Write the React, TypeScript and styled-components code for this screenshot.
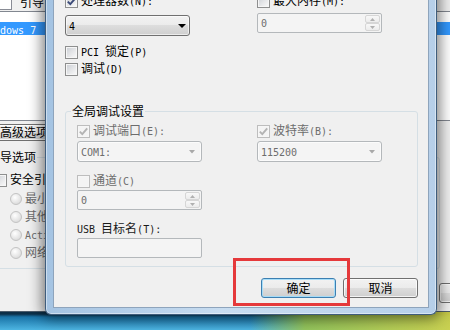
import React from "react";
import styled, { createGlobalStyle } from "styled-components";

const GlobalStyle = createGlobalStyle`
  html, body {
    margin: 0;
    padding: 0;
    overflow: hidden;
  }
`;

/* ---------- text helpers ---------- */

const Half = styled.span`
  font-family: "DejaVu Sans Mono", "Liberation Mono", monospace;
  font-size: 10px;
`;

/**
 * Draws ASCII runs half-width next to the CJK glyphs, the way SimSun does
 *
 * @param props - The text to draw
 */
const Txt = ({ children }: { children: string }) => (
  <>
    {children
      .split(/([\x20-\x7e]+)/)
      .filter(Boolean)
      .map((part, i) =>
        /^[\x20-\x7e]+$/.test(part) ? <Half key={i}>{part}</Half> : <React.Fragment key={i}>{part}</React.Fragment>
      )}
  </>
);

/* ---------- desktop ---------- */

const Desktop = styled.div`
  position: relative;
  width: 450px;
  height: 330px;
  overflow: hidden;
  font-family: "Noto Sans CJK SC", "Noto Sans CJK JP", sans-serif;
  font-size: 12px;
  line-height: 14px;
  color: #000;
  background:
    linear-gradient(90deg, rgba(150, 196, 64, 0) 250px, rgba(165, 200, 60, 0.8) 305px, rgba(212, 212, 70, 0.92) 450px),
    linear-gradient(180deg, #0c2f48 0, #0c2f48 314px, #1a74a8 317px, #4db5e2 330px);
`;

const Highlight = styled.div`
  position: absolute;
  left: 233px;
  top: 258px;
  width: 117px;
  height: 48px;
  box-sizing: border-box;
  border: 3px solid #e5393b;
  pointer-events: none;
`;

/* ---------- common controls ---------- */

const CheckRow = styled.label<{ $disabled?: boolean; $mt?: number }>`
  display: flex;
  align-items: center;
  gap: 3px;
  height: 14px;
  margin-top: ${(p) => p.$mt ?? 0}px;
  white-space: nowrap;
  color: ${(p) => (p.$disabled ? "#6d6d6d" : "#000")};
`;

const CheckBox = styled.span<{ $disabled?: boolean }>`
  flex: none;
  width: 13px;
  height: 13px;
  box-sizing: border-box;
  display: flex;
  align-items: center;
  justify-content: center;
  border: 1px solid ${(p) => (p.$disabled ? "#bdbdbd" : "#8e8f8f")};
  background: ${(p) =>
    p.$disabled ? "#f4f4f4" : "linear-gradient(135deg, #c9cdd3 0%, #e6e7e9 55%, #fbfbfb 100%)"};
  box-shadow: inset 0 0 0 1px #f6f6f6;
`;

const RadioDot = styled.span`
  flex: none;
  width: 12px;
  height: 12px;
  box-sizing: border-box;
  border-radius: 50%;
  border: 1px solid #c3c3c3;
  background: radial-gradient(circle at 40% 35%, #ffffff 0%, #e6e6e6 55%, #d0d0d0 100%);
`;

interface OptionProps {
  label: string;
  checked?: boolean;
  disabled?: boolean;
  mt?: number;
}

const Option = ({ label, checked, disabled, mt }: OptionProps) => (
  <CheckRow $disabled={disabled} $mt={mt}>
    <CheckBox $disabled={disabled}>
      {checked && (
        <svg width="11" height="11" viewBox="0 0 11 11">
          <path
            d="M1.8 5.6 L4.3 8.2 L9.2 2.4"
            fill="none"
            stroke={disabled ? "#b3b3b3" : "#3b4a78"}
            strokeWidth="1.9"
          />
        </svg>
      )}
    </CheckBox>
    <span>
      <Txt>{label}</Txt>
    </span>
  </CheckRow>
);

const Radio = ({ label }: { label: string }) => (
  <CheckRow $disabled>
    <RadioDot />
    <span>
      <Txt>{label}</Txt>
    </span>
  </CheckRow>
);

const ComboBox = styled.div<{ $disabled?: boolean; $mt?: number }>`
  display: flex;
  align-items: center;
  box-sizing: border-box;
  width: 125px;
  height: 21px;
  margin-top: ${(p) => p.$mt ?? 0}px;
  padding: 0 3px;
  border: 1px solid ${(p) => (p.$disabled ? "#b4b8bb" : "#707070")};
  border-radius: 3px;
  color: ${(p) => (p.$disabled ? "#6d6d6d" : "#000")};
  background: ${(p) =>
    p.$disabled ? "#f4f4f4" : "linear-gradient(#f2f2f2 0%, #ebebeb 50%, #dddddd 50%, #cfcfcf 100%)"};
  box-shadow: inset 0 0 0 1px rgba(255, 255, 255, 0.6);
`;

const ComboValue = styled.span`
  flex: 1;
  white-space: nowrap;
`;

const Combo = ({ value, disabled, mt }: { value: string; disabled?: boolean; mt?: number }) => (
  <ComboBox $disabled={disabled} $mt={mt}>
    <ComboValue>
      <Txt>{value}</Txt>
    </ComboValue>
    {disabled ? (
      <svg width="6" height="4" viewBox="0 0 6 4" style={{ marginRight: 3 }}>
        <path d="M0 0 H6 L3 3.5 Z" fill="#a8a8a8" />
      </svg>
    ) : (
      <svg width="8" height="4" viewBox="0 0 8 4">
        <path d="M0 0 H8 L4 4 Z" fill="#000" />
      </svg>
    )}
  </ComboBox>
);

const EditBox = styled.div<{ $mt?: number }>`
  display: flex;
  align-items: center;
  box-sizing: border-box;
  width: 125px;
  height: 20px;
  margin-top: ${(p) => p.$mt ?? 0}px;
  padding: 1px 1px 1px 3px;
  border: 1px solid #b4b8bb;
  border-radius: 2px;
  background: #f4f4f4;
  color: #6d6d6d;
`;

const SpinButtons = styled.div`
  margin-left: auto;
  display: flex;
  flex-direction: column;
  width: 15px;
  height: 100%;
`;

const SpinHalf = styled.div`
  flex: 1;
  display: flex;
  align-items: center;
  justify-content: center;
  box-sizing: border-box;
  border: 1px solid #d6d6d6;
  border-radius: 2px;
  background: linear-gradient(#f8f8f8, #ececec);
`;

const Spin = ({ value, mt }: { value: string; mt?: number }) => (
  <EditBox $mt={mt}>
    <ComboValue>
      <Txt>{value}</Txt>
    </ComboValue>
    <SpinButtons>
      <SpinHalf>
        <svg width="5" height="3" viewBox="0 0 5 3">
          <path d="M0 3 H5 L2.5 0 Z" fill="#b0b0b0" />
        </svg>
      </SpinHalf>
      <SpinHalf>
        <svg width="5" height="3" viewBox="0 0 5 3">
          <path d="M0 0 H5 L2.5 3 Z" fill="#b0b0b0" />
        </svg>
      </SpinHalf>
    </SpinButtons>
  </EditBox>
);

const Button = styled.button<{ $default?: boolean; $w?: number; $h?: number }>`
  flex: none;
  width: ${(p) => p.$w ?? 75}px;
  height: ${(p) => p.$h ?? 20}px;
  box-sizing: border-box;
  padding: 0;
  font: inherit;
  line-height: 14px;
  color: #000;
  white-space: nowrap;
  border: 1px solid ${(p) => (p.$default ? "#3c7fb1" : "#707070")};
  border-radius: 3px;
  background: linear-gradient(#f2f2f2 0%, #ebebeb 50%, #dddddd 50%, #cfcfcf 100%);
  box-shadow: inset 0 0 0 1px ${(p) => (p.$default ? "rgba(160, 220, 250, 0.9)" : "rgba(255, 255, 255, 0.75)")};
`;

const Group = styled.fieldset<{ $mt?: number }>`
  margin: ${(p) => p.$mt ?? 0}px 0 0 0;
  padding: 0 0 8px 5px;
  min-width: 0;
  border: 1px solid #d5dfe5;
  border-radius: 3px;
`;

const GroupLegend = styled.legend`
  padding: 0 1px;
  line-height: 14px;
  white-space: nowrap;
`;

const GroupBody = styled.div<{ $indent: number }>`
  display: flex;
  flex-direction: column;
  align-items: flex-start;
  padding-left: ${(p) => p.$indent}px;
`;

/* ---------- msconfig window behind ---------- */

const BackWindow = styled.div`
  position: absolute;
  left: -30px;
  top: 0;
  width: 560px;
  height: 312px;
  box-sizing: border-box;
  padding: 0 10px;
  display: flex;
  flex-direction: column;
  background: #f0f0f0;
  border-bottom: 1px solid #4d5c6b;
`;

const TabStrip = styled.div`
  display: flex;
  align-items: flex-start;
  height: 11px;
`;

const TabPage = styled.div`
  width: 32px;
  height: 10px;
  box-sizing: border-box;
  background: #fff;
  border-right: 1px solid #898c95;
  border-bottom: 1px solid #898c95;
`;

const TabLabel = styled.span`
  margin: -5px 0 0 8px;
`;

const OsList = styled.div`
  height: 110px;
  box-sizing: border-box;
  padding-top: 10px;
  background: #fff;
  border: 1px solid #828790;
`;

const OsRow = styled.div`
  height: 13px;
  line-height: 13px;
  padding-left: 1px;
  white-space: nowrap;
  background: #3399ff;
  color: #fff;
`;

const BackButtons = styled.div`
  display: flex;
  gap: 7px;
  margin: 3px 0 0 12px;
`;

const BackGroup = styled(Group)`
  margin-left: 1px;
  margin-right: 80px;
`;

const RadioList = styled.div`
  display: flex;
  flex-direction: column;
  gap: 4px;
  margin: 5px 0 0 16px;
`;

const BackBottom = styled.div`
  margin-top: auto;
  display: flex;
  justify-content: flex-end;
  gap: 7px;
  padding: 0 6px 8px 0;
`;

/* ---------- advanced options dialog ---------- */

const Dialog = styled.div`
  position: absolute;
  left: 45px;
  top: -14px;
  width: 392px;
  box-sizing: border-box;
  padding: 0 7px 6px;
  border: 1px solid #3f5d7c;
  border-top: none;
  border-radius: 0 0 6px 6px;
  background: linear-gradient(90deg, #a4c3e2 0%, #c8ddf1 45%, #b6cfe9 100%);
  box-shadow: inset 0 0 0 1px rgba(255, 255, 255, 0.45), 0 0 14px 3px rgba(0, 0, 0, 0.5);
`;

const Client = styled.div`
  display: flex;
  flex-direction: column;
  padding: 8px 10px 9px 11px;
  background: #f0f0f0;
  border: 1px solid #8ea4bc;
  border-top: none;
`;

const PairGrid = styled.div<{ $left: number; $mt?: number }>`
  display: grid;
  grid-template-columns: ${(p) => p.$left}px 125px;
  align-items: start;
  margin-top: ${(p) => p.$mt ?? 0}px;
`;

const Cell = styled.div`
  display: flex;
  flex-direction: column;
`;

const FieldLabel = styled.div<{ $mt?: number }>`
  height: 14px;
  margin-top: ${(p) => p.$mt ?? 0}px;
  white-space: nowrap;
  color: #1a1a1a;
`;

const DialogButtons = styled.div`
  display: flex;
  justify-content: flex-end;
  gap: 7px;
  margin-top: 11px;
`;

export default function App() {
  return (
    <>
      <GlobalStyle />
      <Desktop>
        <BackWindow>
          <TabStrip>
            <TabPage />
            <TabLabel>引导</TabLabel>
          </TabStrip>
          <OsList>
            <OsRow>
              <Txt>Windows 7</Txt>
            </OsRow>
          </OsList>
          <BackButtons>
            <Button $w={100} $h={17}>
              <Txt>高级选项(V)...</Txt>
            </Button>
          </BackButtons>
          <BackGroup $mt={9}>
            <GroupLegend>引导选项</GroupLegend>
            <GroupBody $indent={7}>
              <Option label="安全引导(F)" mt={9} />
              <RadioList>
                <Radio label="最小(I)" />
                <Radio label="其他外壳(L)" />
                <Radio label="Active" />
                <Radio label="网络(W)" />
              </RadioList>
            </GroupBody>
          </BackGroup>
          <BackBottom>
            <Button>
              <Txt>应用(A)</Txt>
            </Button>
          </BackBottom>
        </BackWindow>

        <Dialog>
          <Client>
            <PairGrid $left={192}>
              <Cell>
                <Option label="处理器数(N):" checked />
                <Combo value="4" mt={7} />
              </Cell>
              <Cell>
                <Option label="最大内存(M):" />
                <Spin value="0" mt={5} />
              </Cell>
            </PairGrid>
            <Option label="PCI 锁定(P)" mt={9} />
            <Option label="调试(D)" mt={3} />

            <Group $mt={28}>
              <GroupLegend>全局调试设置</GroupLegend>
              <GroupBody $indent={6}>
                <PairGrid $left={180} $mt={6}>
                  <Cell>
                    <Option label="调试端口(E):" checked disabled />
                    <Combo value="COM1:" disabled mt={3} />
                  </Cell>
                  <Cell>
                    <Option label="波特率(B):" checked disabled />
                    <Combo value="115200" disabled mt={3} />
                  </Cell>
                </PairGrid>
                <Option label="通道(C)" disabled mt={12} />
                <Spin value="0" mt={2} />
                <FieldLabel $mt={11}>
                  <Txt>USB 目标名(T):</Txt>
                </FieldLabel>
                <EditBox $mt={3} />
              </GroupBody>
            </Group>

            <DialogButtons>
              <Button $default>确定</Button>
              <Button>取消</Button>
            </DialogButtons>
          </Client>
        </Dialog>

        <Highlight />
      </Desktop>
    </>
  );
}
